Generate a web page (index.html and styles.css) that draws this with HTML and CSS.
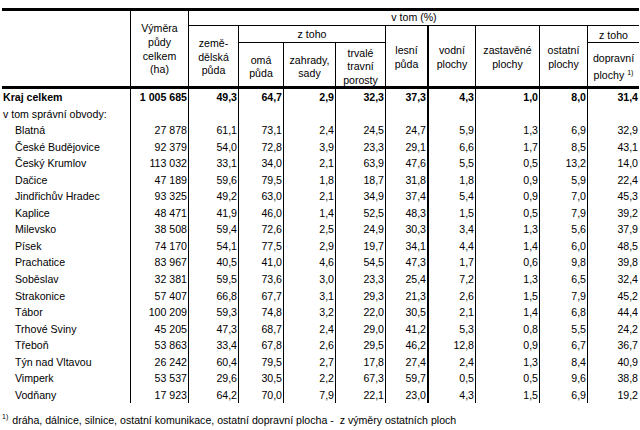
FILE: index.html
```html
<!DOCTYPE html>
<html lang="cs">
<head>
<meta charset="utf-8">
<title>Výměra půdy</title>
<link rel="stylesheet" href="styles.css">
</head>
<body>
<div class="page">
  <div class="tbl">
    <div class="h h-empty"></div>
    <div class="h h-vymera">Výměra<br>půdy<br>celkem<br>(ha)</div>
    <div class="h h-vtom">v tom (%)</div>
    <div class="h h-zem">země-<br>dělská<br>půda</div>
    <div class="h h-ztoho">z toho</div>
    <div class="h h-lesni">lesní<br>půda</div>
    <div class="h h-vodni">vodní<br>plochy</div>
    <div class="h h-zast">zastavěné<br>plochy</div>
    <div class="h h-ost">ostatní<br>plochy</div>
    <div class="h h-ztoho2">z toho</div>
    <div class="h h-orna">omá<br>půda</div>
    <div class="h h-zahr">zahrady,<br>sady</div>
    <div class="h h-trv">trvalé<br>travní<br>porosty</div>
    <div class="h h-dopr"><span class="ln">dopravní</span><span class="ln ln2">plochy <sup>1)</sup></span></div>
    <div class="divider"></div>

    <div class="r bold"><div>Kraj celkem</div><div>1 005 685</div><div>49,3</div><div>64,7</div><div>2,9</div><div>32,3</div><div>37,3</div><div>4,3</div><div>1,0</div><div>8,0</div><div>31,4</div></div>
    <div class="r"><div>v tom správní obvody:</div><div></div><div></div><div></div><div></div><div></div><div></div><div></div><div></div><div></div><div></div></div>
    <div class="r sub"><div>Blatná</div><div>27 878</div><div>61,1</div><div>73,1</div><div>2,4</div><div>24,5</div><div>24,7</div><div>5,9</div><div>1,3</div><div>6,9</div><div>32,9</div></div>
    <div class="r sub"><div>České Budějovice</div><div>92 379</div><div>54,0</div><div>72,8</div><div>3,9</div><div>23,3</div><div>29,1</div><div>6,6</div><div>1,7</div><div>8,5</div><div>43,1</div></div>
    <div class="r sub"><div>Český Krumlov</div><div>113 032</div><div>33,1</div><div>34,0</div><div>2,1</div><div>63,9</div><div>47,6</div><div>5,5</div><div>0,5</div><div>13,2</div><div>14,0</div></div>
    <div class="r sub"><div>Dačice</div><div>47 189</div><div>59,6</div><div>79,5</div><div>1,8</div><div>18,7</div><div>31,8</div><div>1,8</div><div>0,9</div><div>5,9</div><div>22,4</div></div>
    <div class="r sub"><div>Jindřichův Hradec</div><div>93 325</div><div>49,2</div><div>63,0</div><div>2,1</div><div>34,9</div><div>37,4</div><div>5,4</div><div>0,9</div><div>7,0</div><div>45,3</div></div>
    <div class="r sub"><div>Kaplice</div><div>48 471</div><div>41,9</div><div>46,0</div><div>1,4</div><div>52,5</div><div>48,3</div><div>1,5</div><div>0,5</div><div>7,9</div><div>39,2</div></div>
    <div class="r sub"><div>Milevsko</div><div>38 508</div><div>59,4</div><div>72,6</div><div>2,5</div><div>24,9</div><div>30,3</div><div>3,4</div><div>1,3</div><div>5,6</div><div>37,9</div></div>
    <div class="r sub"><div>Písek</div><div>74 170</div><div>54,1</div><div>77,5</div><div>2,9</div><div>19,7</div><div>34,1</div><div>4,4</div><div>1,4</div><div>6,0</div><div>48,5</div></div>
    <div class="r sub"><div>Prachatice</div><div>83 967</div><div>40,5</div><div>41,0</div><div>4,6</div><div>54,5</div><div>47,3</div><div>1,7</div><div>0,6</div><div>9,8</div><div>39,8</div></div>
    <div class="r sub"><div>Soběslav</div><div>32 381</div><div>59,5</div><div>73,6</div><div>3,0</div><div>23,3</div><div>25,4</div><div>7,2</div><div>1,3</div><div>6,5</div><div>32,4</div></div>
    <div class="r sub"><div>Strakonice</div><div>57 407</div><div>66,8</div><div>67,7</div><div>3,1</div><div>29,3</div><div>21,3</div><div>2,6</div><div>1,5</div><div>7,9</div><div>45,2</div></div>
    <div class="r sub"><div>Tábor</div><div>100 209</div><div>59,3</div><div>74,8</div><div>3,2</div><div>22,0</div><div>30,5</div><div>2,1</div><div>1,4</div><div>6,8</div><div>44,4</div></div>
    <div class="r sub"><div>Trhové Sviny</div><div>45 205</div><div>47,3</div><div>68,7</div><div>2,4</div><div>29,0</div><div>41,2</div><div>5,3</div><div>0,8</div><div>5,5</div><div>24,2</div></div>
    <div class="r sub"><div>Třeboň</div><div>53 863</div><div>33,4</div><div>67,8</div><div>2,6</div><div>29,5</div><div>46,2</div><div>12,8</div><div>0,9</div><div>6,7</div><div>36,7</div></div>
    <div class="r sub"><div>Týn nad Vltavou</div><div>26 242</div><div>60,4</div><div>79,5</div><div>2,7</div><div>17,8</div><div>27,4</div><div>2,4</div><div>1,3</div><div>8,4</div><div>40,9</div></div>
    <div class="r sub"><div>Vimperk</div><div>53 537</div><div>29,6</div><div>30,5</div><div>2,2</div><div>67,3</div><div>59,7</div><div>0,5</div><div>0,5</div><div>9,6</div><div>38,8</div></div>
    <div class="r sub"><div>Vodňany</div><div>17 923</div><div>64,2</div><div>70,0</div><div>7,9</div><div>22,1</div><div>23,0</div><div>4,3</div><div>1,5</div><div>6,9</div><div>19,2</div></div>
  </div>
  <p class="note"><sup>1)</sup>dráha, dálnice, silnice, ostatní komunikace, ostatní dopravní plocha -&nbsp; z výměry ostatních ploch</p>
</div>
</body>
</html>
```

FILE: styles.css
```css
* { box-sizing: border-box; }

html, body {
  margin: 0;
  padding: 0;
  background: #fff;
}

body {
  font-family: "Liberation Sans", Arial, sans-serif;
  font-size: 10.6px;
  color: #000;
}

.page {
  padding: 8px 0 0 2px;
}

.tbl {
  display: grid;
  width: 637px;
  grid-template-columns: 129px 58px 50px 45px 52px 50px 43px 47px 64px 48px 51px;
  grid-template-rows: 15px 17px 43px 3px repeat(19, 16.55px);
  border-top: 3px solid #000;
}

.h {
  display: flex;
  flex-direction: column;
  justify-content: center;
  align-items: center;
  text-align: center;
  line-height: 13.5px;
  white-space: nowrap;
}

.h-empty  { grid-column: 1; grid-row: 1 / 4; border-right: 1px solid #000; }
.h-vymera { grid-column: 2; grid-row: 1 / 4; border-right: 1px solid #000; line-height: 13.9px; padding-top: 2px; }
.h-vtom   { grid-column: 3 / 12; grid-row: 1; border-bottom: 1px solid #000; }
.h-zem    { grid-column: 3; grid-row: 2 / 4; border-right: 1px solid #000; padding-top: 3px; }
.h-ztoho  { grid-column: 4 / 7; grid-row: 2; border-right: 1px solid #000; border-bottom: 1px solid #000; padding-top: 2px; }
.h-lesni  { grid-column: 7; grid-row: 2 / 4; border-right: 2px solid #000; padding-top: 3px; }
.h-vodni  { grid-column: 8; grid-row: 2 / 4; border-right: 1px solid #000; padding-top: 3px; }
.h-zast   { grid-column: 9; grid-row: 2 / 4; border-right: 1px solid #000; padding-top: 3px; }
.h-ost    { grid-column: 10; grid-row: 2 / 4; border-right: 1px solid #000; padding-top: 3px; }
.h-ztoho2 { grid-column: 11; grid-row: 2; border-bottom: 1px solid #000; padding-top: 3px; }
.h-orna   { grid-column: 4; grid-row: 3; border-right: 1px solid #000; padding-top: 5px; }
.h-zahr   { grid-column: 5; grid-row: 3; border-right: 1px solid #000; padding-top: 5px; }
.h-trv    { grid-column: 6; grid-row: 3; border-right: 1px solid #000; padding-top: 5px; }
.h-dopr   { grid-column: 11; grid-row: 3; padding-top: 5px; }

.h-dopr .ln { display: block; }
.h-dopr .ln2 { margin-top: 3px; }

.h sup {
  font-size: 7px;
  line-height: 0;
  vertical-align: 4px;
}

.divider {
  grid-column: 1 / -1;
  grid-row: 4;
  background: #000;
}

.r { display: contents; }

.r > div {
  line-height: 16.55px;
  text-align: right;
  padding-right: 1px;
  white-space: nowrap;
}

.r > div:nth-child(-n+10) { border-right: 1px solid #000; }
.r > div:nth-child(7) { border-right-width: 2px; }

.r > div:first-child {
  text-align: left;
  padding-left: 1px;
}

.r.sub > div:first-child { padding-left: 13px; }

.r.bold > div { font-weight: bold; }

.note {
  margin: 11px 0 0 0;
  line-height: 13px;
  white-space: nowrap;
}

.note sup {
  font-size: 7px;
  line-height: 0;
  vertical-align: 5px;
  margin-right: 4px;
}
```
